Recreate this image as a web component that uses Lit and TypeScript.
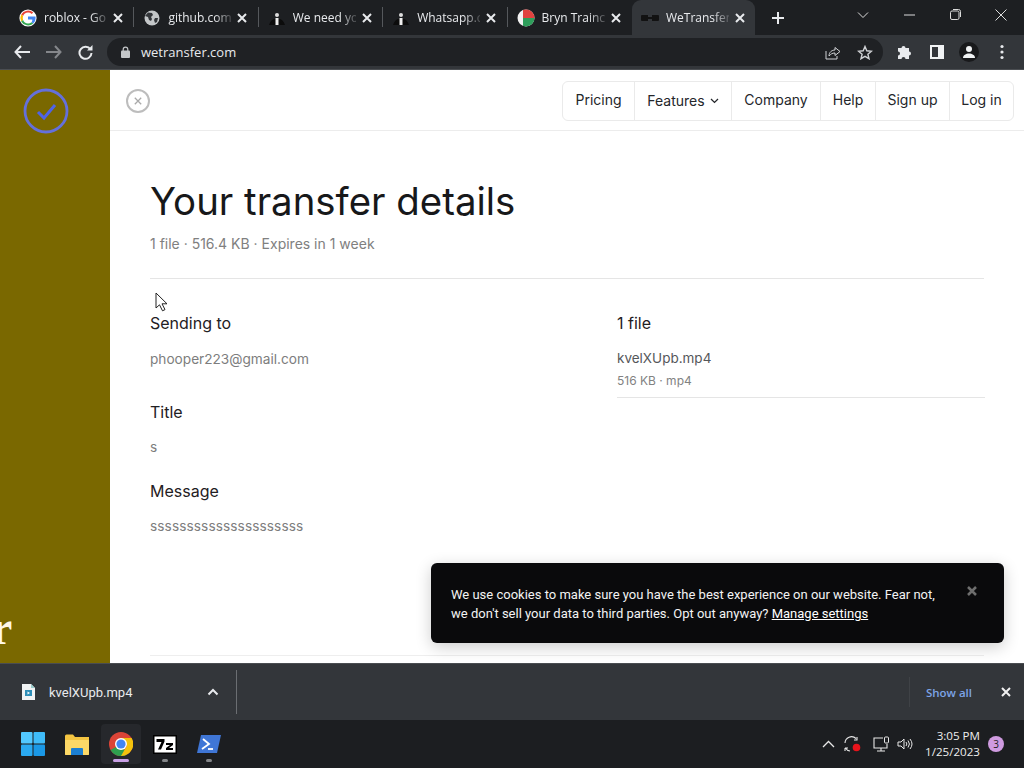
import { LitElement, html, css } from "lit";
import { customElement } from "lit/decorators.js";

const X = (size: number, w = 2) => html`<svg width=${size} height=${size} viewBox="0 0 10 10"><path d="M1 1 9 9M9 1 1 9" stroke="currentColor" stroke-width=${w} fill="none"/></svg>`;

const google = html`<svg width="18" height="18" viewBox="0 0 18 18"><circle cx="9" cy="9" r="8.6" fill="#fff"/><path d="M9 3.6a5.4 5.4 0 0 1 3.7 1.4L14.3 3.4A8 8 0 0 0 2.2 5.6l1.9 1.5A5.2 5.2 0 0 1 9 3.6Z" fill="#ea4335"/><path d="M4.1 7.1 2.2 5.6a8 8 0 0 0 0 6.8l1.9-1.5a5.2 5.2 0 0 1 0-3.8Z" fill="#fbbc05"/><path d="M9 14.4a5.2 5.2 0 0 1-4.9-3.5l-1.9 1.5A8 8 0 0 0 14.3 14.6l-1.8-1.4A5.4 5.4 0 0 1 9 14.4Z" fill="#34a853"/><path d="M16.6 9c0-.6 0-1-.2-1.6H9v3h4.3a3.8 3.8 0 0 1-.8 2.8l1.8 1.4A7.6 7.6 0 0 0 16.6 9Z" fill="#4285f4"/></svg>`;
const globe = html`<svg width="16" height="16" viewBox="0 0 16 16"><circle cx="8" cy="8" r="7.5" fill="#c4c7c9"/><path d="M4 2.5 8 3l1 2-2 2 1 2-1 2-2-1-1-3-3-1ZM11 8l3 0-1 4-2 1-1-3Z" fill="#33363a"/></svg>`;
const person = html`<svg width="18" height="18" viewBox="0 0 18 18"><path d="M1 16c1-4 4-6 5-6l3 1 3-1c1 0 4 2 5 6Z" fill="#0c0c0c"/><circle cx="9" cy="6" r="2" fill="#ddd"/><path d="M7.5 9h3L10.500 16h-3Z" fill="#eee"/></svg>`;
const flag = html`<svg width="18" height="18" viewBox="0 0 18 18"><defs><clipPath id="fc"><circle cx="9" cy="9" r="8.500"/></clipPath></defs><g clip-path="url(#fc)"><rect width="18" height="18" fill="#f2f2f2"/><rect x="6" width="12" height="9" fill="#e0433f"/><rect x="6" y="9" width="12" height="9" fill="#2e9e5b"/></g></svg>`;
const mask = html`<svg width="18" height="8" viewBox="0 0 18 8"><path d="M0 2a1 1 0 0 1 1-1h6v2h4V1h6a1 1 0 0 1 1 1v4a1 1 0 0 1-1 1h-6V5H7v2H1a1 1 0 0 1-1-1Z" fill="#121212"/></svg>`;

const tabs = [
  { icon: google, title: "roblox - Go" },
  { icon: globe, title: "github.com" },
  { icon: person, title: "We need yo" },
  { icon: person, title: "Whatsapp.c" },
  { icon: flag, title: "Bryn Trainc" },
  { icon: mask, title: "WeTransfer", active: true },
];

const navItems = ["Pricing", "Features", "Company", "Help", "Sign up", "Log in"];

@customElement("app-root")
export class AppRoot extends LitElement {
  static styles = css`
    :host { display: flex; flex-direction: column; width: 1024px; height: 768px; overflow: hidden; position: relative; font-family: "Inter", "Liberation Sans", sans-serif; background: #fff; }
    * { box-sizing: border-box; }
    svg { display: block; flex: none; }

    .strip { height: 35px; background: #1d1f22; display: flex; align-items: stretch; padding-left: 10px; color: #e8eaed; flex: none; }
    .tab { width: 123.4px; display: flex; align-items: center; padding: 0 0 0 9px; position: relative; font: 12px "Open Sans", "Noto Sans", sans-serif; }
    .tab .fav { width: 18px; display: flex; justify-content: center; margin-right: 7px; flex: none; }
    .tab .t { width: 63px; white-space: nowrap; flex: none; -webkit-mask-image: linear-gradient(90deg, #000 74%, rgba(0,0,0,.25) 98%); mask-image: linear-gradient(90deg, #000 74%, rgba(0,0,0,.25) 98%); }
    .tab .c { margin-left: 6px; color: #e8eaed; flex: none; }
    .sep { width: 1px; height: 20px; background: #55585c; align-self: center; margin-bottom: 2px; flex: none; }
    .tab.active { background: #33363a; border-radius: 9px 9px 0 0; }
    .spacer { width: 1px; flex: none; }
    .plus { margin-left: 15px; align-self: center; color: #e8eaed; }
    .win { margin-left: auto; display: flex; align-items: center; color: #dcdcdc; height: 29px; }
    .win span { display: flex; width: 46px; justify-content: center; }

    .toolbar { height: 35px; background: #33363a; display: flex; align-items: center; padding-left: 14px; color: #e8eaed; flex: none; border-bottom: 1px solid #4b4e52; }
    .nav { display: flex; gap: 16px; align-items: center; }
    .omni { margin-left: 14px; width: 776px; height: 28px; background: #1f2124; border-radius: 14px; display: flex; align-items: center; padding: 0 10px 0 14px; font: 13px "Open Sans", "Noto Sans", sans-serif; color: #e8eaed; }
    .omni .url { margin-left: 11px; }
    .omni .actions { margin-left: auto; display: flex; gap: 16px; align-items: center; color: #d0d2d5; }
    .ext { margin-left: 14px; display: flex; align-items: center; gap: 15px; }
    .avatar { width: 20px; height: 20px; border-radius: 50%; background: #18191b; display: flex; align-items: center; justify-content: center; }
    .dots { margin-left: 6px; }

    .main { flex: 1; display: flex; min-height: 0; position: relative; }
    .side { width: 110px; background: #7a6800; flex: none; position: relative; overflow: hidden; padding: 18px 0 0 23px; }
    .side .r { position: absolute; left: -9px; top: 533px; font: bold 48px/50px "Liberation Serif", serif; color: #fff8e8; }
    .content { flex: 1; display: flex; flex-direction: column; min-width: 0; }
    .head { height: 61px; border-bottom: 1px solid #ececec; display: flex; align-items: center; justify-content: space-between; padding: 2px 10px 0 16px; flex: none; }
    .closeBtn { width: 24px; height: 24px; border-radius: 50%; border: 2px solid #bdbdbd; display: flex; align-items: center; justify-content: center; color: #a9a9a9; }
    .menu { display: grid; grid-template-columns: 71px 97px 89px 55px 74px 64px; height: 40px; border: 1px solid #eaeaea; border-radius: 6px; }
    .menu .it { display: flex; align-items: center; justify-content: center; font-size: 14px; color: #24262a; border-left: 1px solid #eaeaea; gap: 5px; white-space: nowrap; padding-bottom: 3px; }
    .menu .it.drop { padding-bottom: 1px; }
    .menu .it:first-child { border-left: none; }

    .body { padding: 0 40px; flex: 1; display: flex; flex-direction: column; }
    h1 { font-size: 38.4px; font-weight: 400; margin: 45px 0 0; color: #17181a; line-height: 50px; }
    .meta { margin-top: 8px; font-size: 14px; line-height: 20px; color: #808080; padding-bottom: 24px; border-bottom: 1px solid #e5e5e5; }
    .cols { display: grid; grid-template-columns: 467px 368px; }
    .col h2 { font-size: 16px; font-weight: 400; line-height: 20px; margin: 0; color: #1f2023; }
    .col p { margin: 17px 0 0; font-size: 13.65px; line-height: 18px; color: #7d7d7d; }
    .left { padding-top: 34px; }
    .left h2.b { margin-top: 34px; }
    .left h2.c { margin-top: 25px; }
    .left h2.b + p, .left h2.c + p { margin-top: 16px; }
    .left p.long { letter-spacing: .1px; }
    .rightcol { padding-top: 34px; }
    .file { font-size: 13.5px; color: #55575a; margin-top: 15px; line-height: 20px; }
    .fsub { font-size: 12px; color: #828282; line-height: 16px; margin-top: 5px; padding-bottom: 8px; border-bottom: 1px solid #e5e5e5; }
    .endrule { margin-top: auto; border-bottom: 1px solid #eeeeee; margin-bottom: 7px; }

    .cursor { position: absolute; left: 155px; top: 222px; }
    .cookie { position: absolute; left: 431px; top: 493px; width: 573px; height: 80px; background: #0a0a0c; border-radius: 6px; box-shadow: 0 4px 16px rgba(0,0,0,.2); color: #f3f3f3; padding: 22px 20px; font: 13px/19px Roboto, "Open Sans", sans-serif; }
    .cookie u { color: #fff; }
    .cookie .x { position: absolute; left: 536px; top: 23px; color: #6e6e6e; }

    .dl { height: 57px; flex: none; background: #33363a; border-top: 1px solid #4a4d51; display: flex; align-items: center; color: #e8eaed; padding-left: 22px; }
    .dl .name { margin-left: 14px; width: 158px; font: 13px Roboto, "Open Sans", sans-serif; }
    .dl .chev { width: 12px; }
    .dl .div { width: 1px; height: 44px; background: #6b6e72; margin-left: 17px; }
    .dl .all { margin-left: auto; color: #7da4e6; font: 600 11.5px "Open Sans", "Noto Sans", sans-serif; border-left: 1px solid #3f4246; padding-left: 16px; height: 30px; display: flex; align-items: center; }
    .dl .cl { margin: 0 13px 0 29px; color: #f1f1f1; }

    .task { height: 48px; flex: none; background: #1c1e21; display: flex; align-items: center; padding-left: 21px; color: #e8e8e8; position: relative; }
    .apps { display: flex; align-items: center; gap: 20px; }
    .app { width: 24px; height: 24px; position: relative; display: flex; align-items: center; justify-content: center; }
    .app.on::before { content: ""; position: absolute; left: -8px; top: -8px; width: 40px; height: 40px; border-radius: 4px; background: #26282c; }
    .app svg { position: relative; }
    .app::after { content: ""; position: absolute; left: 9px; top: 27px; width: 6px; height: 3px; border-radius: 2px; background: #85878a; }
    .app.none::after { display: none; }
    .app.on::after { left: 4px; width: 16px; background: #c9a0e6; }
    .tray { margin-left: auto; display: flex; align-items: center; color: #e8e8e8; padding-right: 20px; }
    .tray .ic { display: flex; align-items: center; margin-right: 12px; }
    .tray .ic .sync { margin: 0 12px 0 9px; }
    .tray .ic .vol { margin-left: 7px; }
    .clock { font: 11.6px/16px "Open Sans", "Noto Sans", sans-serif; text-align: right; color: #eee; }
    .badge { margin-left: 8px; width: 16px; height: 16px; border-radius: 50%; background: #cf9be0; color: #222; font: 10px/16px "Open Sans", sans-serif; text-align: center; }
  `;

  render() {
    return html`
      <div class="strip">
        ${tabs.map((t, i) => html`
          <div class="tab ${t.active ? "active" : ""}">
            <span class="fav">${t.icon}</span>
            <span class="t">${t.title}</span>
            <span class="c">${X(10, 2)}</span>
          </div>
          ${i < 4 ? html`<span class="sep"></span>` : html`<span class="spacer"></span>`}
        `)}
        <span class="plus"><svg width="14" height="14" viewBox="0 0 14 14"><path d="M7 1v12M1 7h12" stroke="currentColor" stroke-width="2"/></svg></span>
        <div class="win">
          <span><svg width="12" height="8" viewBox="0 0 12 8"><path d="M1 1.500 6 6.500 11 1.500" fill="none" stroke="currentColor"/></svg></span>
          <span><svg width="11" height="2" viewBox="0 0 11 2"><path d="M0 1h11" stroke="currentColor"/></svg></span>
          <span><svg width="11" height="11" viewBox="0 0 11 11"><rect x=".5" y="2" width="8.500" height="8.500" rx="1.500" fill="none" stroke="currentColor"/><path d="M3 .5h5.500A2 2 0 0 1 10.500 2.500V8" fill="none" stroke="currentColor"/></svg></span>
          <span><svg width="12" height="12" viewBox="0 0 12 12"><path d="M.5.5l11 11M11.500.5l-11 11" stroke="currentColor"/></svg></span>
        </div>
      </div>

      <div class="toolbar">
        <div class="nav">
          <svg width="16" height="14" viewBox="0 0 16 14"><path d="M7 1 1.500 7 7 13M2 7h14" fill="none" stroke="currentColor" stroke-width="2"/></svg>
          <svg width="16" height="14" viewBox="0 0 16 14" style="opacity:.45"><path d="M9 1l5.500 6L9 13M14 7H0" fill="none" stroke="currentColor" stroke-width="2"/></svg>
          <svg width="15" height="15" viewBox="0 0 15 15"><path d="M12.500 4.500A6 6 0 1 0 13.500 8" fill="none" stroke="currentColor" stroke-width="2"/><path d="M9 5.500h5.500V0Z" fill="currentColor"/></svg>
        </div>
        <div class="omni">
          <svg width="9" height="12" viewBox="0 0 9 12" style="color:#c4c7c9"><path d="M2.200 5V3.500a2.300 2.300 0 0 1 4.600 0V5" fill="none" stroke="currentColor" stroke-width="1.200"/><rect y="4.500" width="9" height="7.500" rx="1" fill="currentColor"/></svg>
          <span class="url">wetransfer.com</span>
          <span class="actions">
            <svg width="16" height="15" viewBox="0 0 16 15"><path d="M1 6v8h11v-3" fill="none" stroke="currentColor"/><path d="M4 11c0-4 3-6 6-6V2.500l5 4-5 4V8c-3 0-4 1-6 3Z" fill="none" stroke="currentColor"/></svg>
            <svg width="16" height="15" viewBox="0 0 16 15"><path d="M8 1.500 9.800 5.800l4.700.4-3.600 3 1.100 4.500L8 11.300l-4 2.400 1.100-4.500-3.600-3 4.700-.4Z" fill="none" stroke="currentColor" stroke-width="1.400"/></svg>
          </span>
        </div>
        <div class="ext">
          <svg width="16" height="16" viewBox="0 0 16 16"><path d="M1 4h3.500a2 2 0 1 1 4 0H12v3.500a2 2 0 1 1 0 4V15H8.500a2 2 0 1 0-4 0H1v-3.500a2 2 0 1 0 0-4Z" fill="#e8eaed"/></svg>
          <svg width="14" height="14" viewBox="0 0 14 14" style="margin-left:2px"><rect x="1" y="1" width="12" height="12" fill="none" stroke="#f1f3f4" stroke-width="2"/><rect x="8" y="1" width="5" height="12" fill="#f1f3f4"/></svg>
          <span class="avatar"><svg width="14" height="14" viewBox="0 0 14 14"><circle cx="7" cy="4" r="3" fill="#f1f3f4"/><path d="M1 13c0-3 3-4.500 6-4.500s6 1.500 6 4.500Z" fill="#f1f3f4"/></svg></span>
          <svg class="dots" width="4" height="16" viewBox="0 0 4 16"><circle cx="2" cy="2.500" r="1.600" fill="#e8eaed"/><circle cx="2" cy="8" r="1.600" fill="#e8eaed"/><circle cx="2" cy="13.500" r="1.600" fill="#e8eaed"/></svg>
        </div>
      </div>

      <div class="main">
        <div class="side">
          <svg width="46" height="46" viewBox="0 0 46 46"><circle cx="23" cy="23" r="21" fill="none" stroke="#6470dc" stroke-width="2.800"/><path d="M15 24l6 6 11-13" fill="none" stroke="#4f63e6" stroke-width="3"/></svg>
          <span class="r">r</span>
        </div>
        <div class="content">
          <div class="head">
            <span class="closeBtn">${X(8, 1.600)}</span>
            <div class="menu">
              ${navItems.map((n) => html`<div class="it ${n === "Features" ? "drop" : ""}">${n}${n === "Features" ? html`<svg width="9" height="6" viewBox="0 0 9 6"><path d="M1 1l3.500 3.400L8 1" fill="none" stroke="#24262a" stroke-width="1.300"/></svg>` : ""}</div>`)}
            </div>
          </div>
          <div class="body">
            <h1>Your transfer details</h1>
            <div class="meta">1 file · 516.4 KB · Expires in 1 week</div>
            <div class="cols">
              <div class="col left">
                <h2>Sending to</h2>
                <p>phooper223@gmail.com</p>
                <h2 class="b">Title</h2>
                <p>s</p>
                <h2 class="c">Message</h2>
                <p class="long">sssssssssssssssssssss</p>
              </div>
              <div class="col rightcol">
                <h2>1 file</h2>
                <div class="file">kvelXUpb.mp4</div>
                <div class="fsub">516 KB · mp4</div>
              </div>
            </div>
            <div class="endrule"></div>
          </div>
        </div>
        <svg class="cursor" width="13" height="20" viewBox="0 0 13 20"><path d="M1 1v15l3.500-3.200 3 6 2.500-1.200-3-5.800H12Z" fill="#fff" stroke="#222" stroke-width="1"/></svg>
        <div class="cookie">
          We use cookies to make sure you have the best experience on our website. Fear not,<br>we don't sell your data to third parties. Opt out anyway? <u>Manage settings</u>
          <span class="x">${X(10, 2.500)}</span>
        </div>
      </div>

      <div class="dl">
        <svg width="13" height="16" viewBox="0 0 13 16"><path d="M0 0h9l4 4v12H0Z" fill="#f1f3f4"/><path d="M9 0l4 4H9Z" fill="#9cc"/><rect x="3" y="6" width="7" height="6" fill="#2f8fb8"/><path d="M5.500 7.500 8 9l-2.500 1.500Z" fill="#fff"/></svg>
        <span class="name">kvelXUpb.mp4</span>
        <svg class="chev" width="12" height="8" viewBox="0 0 12 8"><path d="M1.500 6.500 6 2l4.500 4.500" fill="none" stroke="currentColor" stroke-width="2"/></svg>
        <span class="div"></span>
        <span class="all">Show all</span>
        <span class="cl">${X(10, 2)}</span>
      </div>

      <div class="task">
        <div class="apps">
          <span class="app none"><svg width="24" height="24" viewBox="0 0 24 24"><rect width="11.500" height="11.500" rx="1" fill="#52c8ff"/><rect x="12.500" width="11.500" height="11.500" rx="1" fill="#3fbcf9"/><rect y="12.500" width="11.500" height="11.500" rx="1" fill="#2aa9f0"/><rect x="12.500" y="12.500" width="11.500" height="11.500" rx="1" fill="#1a98e6"/></svg></span>
          <span class="app none"><svg width="24" height="21" viewBox="0 0 24 21"><path d="M0 2a1.500 1.500 0 0 1 1.500-1.500H8L10 3h14v17a1 1 0 0 1-1 1H1a1 1 0 0 1-1-1Z" fill="#f4c542"/><path d="M0 6h24v14a1 1 0 0 1-1 1H1a1 1 0 0 1-1-1Z" fill="#fcd867"/><path d="M7 14h10a1 1 0 0 1 1 1v6H6v-6a1 1 0 0 1 1-1Z" fill="#1c7fd1"/></svg></span>
          <span class="app on"><svg width="24" height="24" viewBox="0 0 24 24"><circle cx="12" cy="12" r="12" fill="#db4437"/><path d="M12 12 1.600 18A12 12 0 0 0 12 24c2.200 0 4.200-.6 6-1.600Z" fill="#2f9e4f"/><path d="M12 6h10.600A12 12 0 0 1 12 24l6-10.400Z" fill="#f4c20d"/><circle cx="12" cy="12" r="6" fill="#fff"/><circle cx="12" cy="12" r="4.600" fill="#4285f4"/></svg></span>
          <span class="app"><svg width="24" height="19" viewBox="0 0 24 19"><rect width="24" height="19" fill="#000"/><rect x="1.500" y="1.500" width="21" height="16" fill="#fff"/><path d="M3.500 4h8v2.500l-3.500 8H5l3.500-7.500h-5ZM13 8h7v2l-4 3h4v2h-7v-2l4-3h-4Z" fill="#000"/></svg></span>
          <span class="app"><svg width="24" height="18" viewBox="0 0 24 18"><path d="M4 0h20l-4 18H0Z" fill="#3f76d6"/><path d="M6 4l6 5-7 5" fill="none" stroke="#fff" stroke-width="1.800"/><path d="M11 14h5" stroke="#fff" stroke-width="1.800"/></svg></span>
        </div>
        <div class="tray">
          <div class="ic">
            <svg width="13" height="8" viewBox="0 0 13 8"><path d="M1 7l5.500-5.500L12 7" fill="none" stroke="currentColor" stroke-width="1.300"/></svg>
            <span class="sync"><svg width="17" height="16" viewBox="0 0 17 16"><path d="M1 7a6.500 6.500 0 0 1 11-4.500M13 1v3H10M1 12v3M1 12h3M1.500 12A6 6 0 0 0 6 15" fill="none" stroke="currentColor" stroke-width="1.100"/><circle cx="12.500" cy="11.500" r="3.800" fill="#e8131b"/></svg></span>
            <svg width="17" height="16" viewBox="0 0 17 16"><path d="M10 2H1v10h13V8M4 15h8M8 12v3" fill="none" stroke="currentColor" stroke-width="1.100"/><rect x="11.500" y="1" width="4" height="6" rx="1" fill="none" stroke="currentColor"/></svg>
            <span class="vol"><svg width="16" height="14" viewBox="0 0 16 14"><path d="M1 5v4h3l3 3V2L4 5Z" fill="none" stroke="currentColor"/><path d="M9 5a3 3 0 0 1 0 4M11 3.500a5.500 5.500 0 0 1 0 7M13 2a8 8 0 0 1 0 10" fill="none" stroke="currentColor"/></svg></span>
          </div>
          <div class="clock">3:05 PM<br>1/25/2023</div>
          <span class="badge">3</span>
        </div>
      </div>
    `;
  }
}
